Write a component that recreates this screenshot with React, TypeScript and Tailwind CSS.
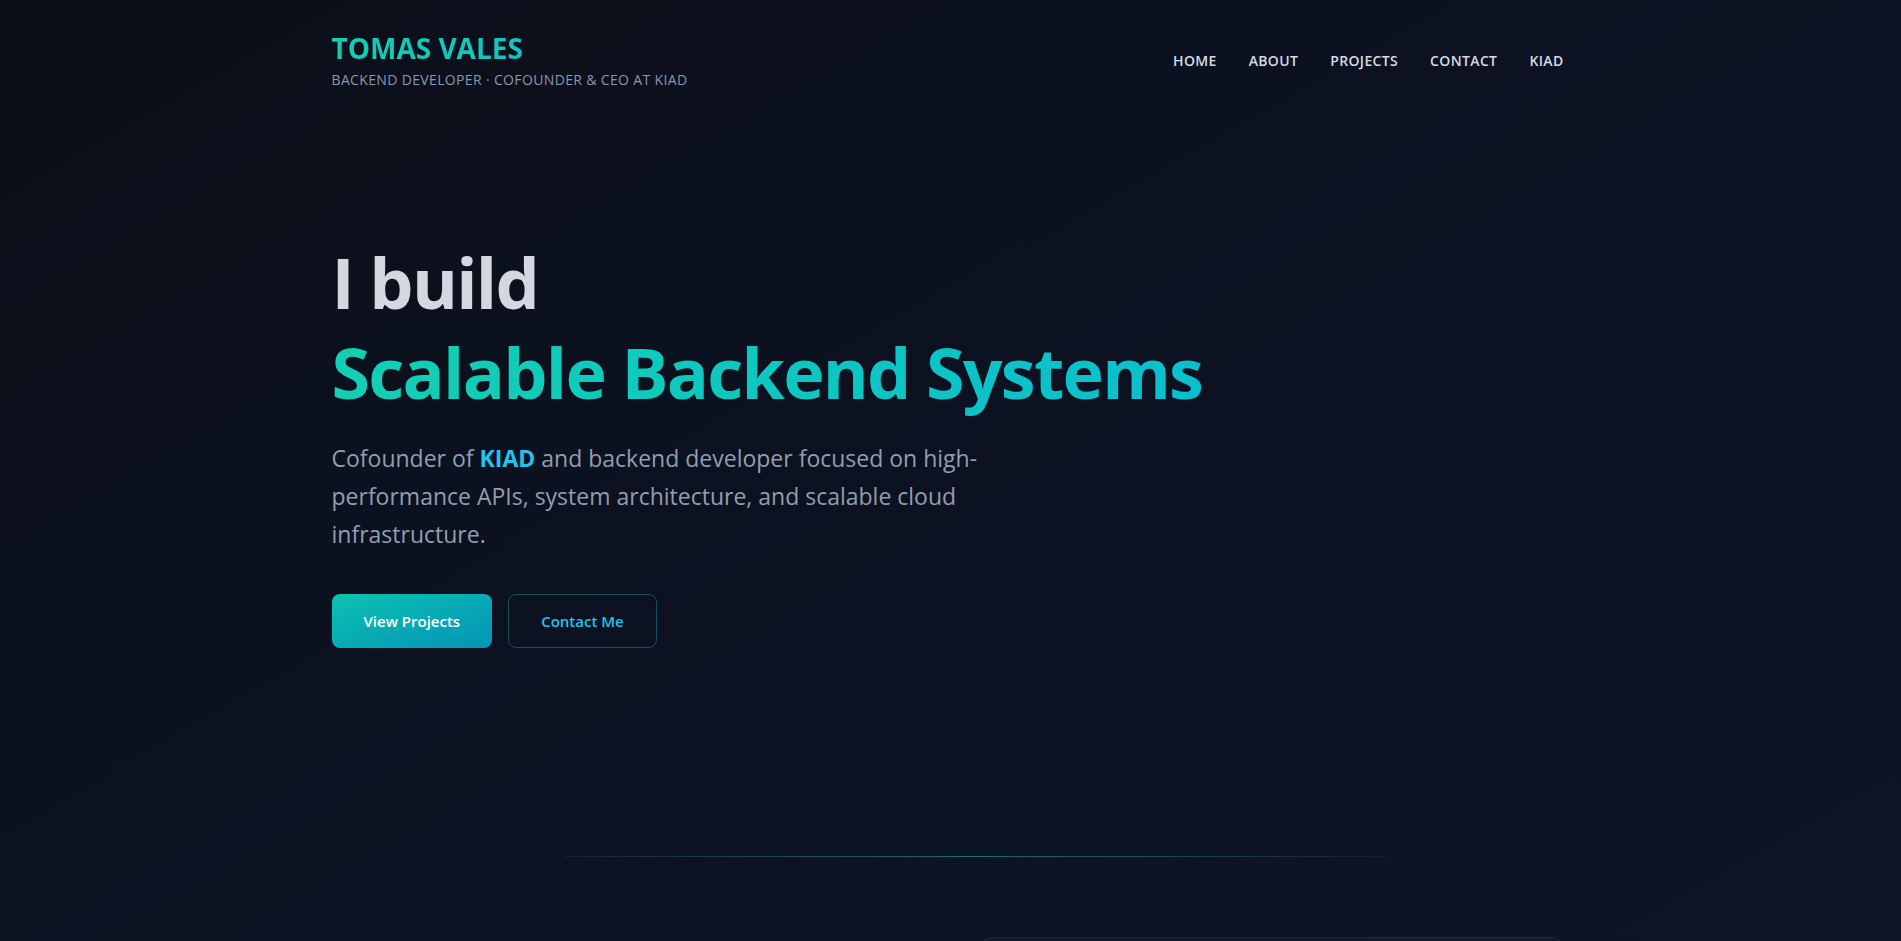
const navLinks = ["Home", "About", "Projects", "Contact", "KIAD"];

function Header() {
  return (
    <header className="flex items-center justify-between pt-[30px]">
      <div>
        <h1 className="bg-gradient-to-r from-[#14cdb0] to-[#12bccc] bg-clip-text text-[28px] font-bold leading-9 text-transparent">
          TOMAS VALES
        </h1>
        <p className="mt-1 text-sm uppercase tracking-wide text-[#8b97ab]">
          Backend Developer · Cofounder &amp; CEO at KIAD
        </p>
      </div>
      <nav className="flex items-center gap-8 pt-px">
        {navLinks.map((link) => (
          <a key={link} href="#" className="text-sm font-semibold uppercase tracking-wide text-[#d5dae4]">
            {link}
          </a>
        ))}
      </nav>
    </header>
  );
}

function Hero() {
  return (
    <section className="pt-[147px]">
      <h2 className="text-[70px] font-bold leading-[90px] tracking-tight">
        <span className="block text-[#d3d7e2]">I build</span>
        <span className="block bg-gradient-to-r from-[#13cfb3] to-[#0cb8d8] bg-clip-text text-transparent">
          Scalable Backend Systems
        </span>
      </h2>
      <p className="mt-[22px] max-w-2xl text-[23px] leading-[38px] text-[#929db0]">
        Cofounder of <span className="font-bold text-[#22c3ee]">KIAD</span> and backend developer focused on
        high-performance APIs, system architecture, and scalable cloud infrastructure.
      </p>
      <div className="mt-[41px] flex gap-4">
        <a
          href="#"
          className="rounded-lg bg-gradient-to-br from-[#10c2ae] to-[#0893b8] px-8 py-[15px] text-[15px] font-semibold leading-6 text-white"
        >
          View Projects
        </a>
        <a
          href="#"
          className="rounded-lg border border-[#17505f] px-8 py-[14px] text-[15px] font-semibold leading-6 text-[#22c3ee]"
        >
          Contact Me
        </a>
      </div>
    </section>
  );
}

export default function App() {
  return (
    <div
      className="min-h-screen overflow-hidden bg-gradient-to-br from-[#0b0f19] via-[#0c1221] to-[#0e1628]"
      style={{ fontFamily: '"Open Sans", "Noto Sans", sans-serif' }}
    >
      <div className="mx-auto max-w-7xl pl-[21px] pr-[27px]">
        <Header />
        <Hero />
        <div className="ml-[232px] mt-[208px] h-px w-[822px] bg-gradient-to-r from-[#1e3a4a]/40 via-[#1a6b78] to-[#1e3a4a]/30" />
        <div className="mt-20 grid grid-cols-2 gap-16">
          <div />
          <div className="h-40 rounded-xl border border-[#1f2a3c] bg-[#111a2b]" />
        </div>
      </div>
    </div>
  );
}
